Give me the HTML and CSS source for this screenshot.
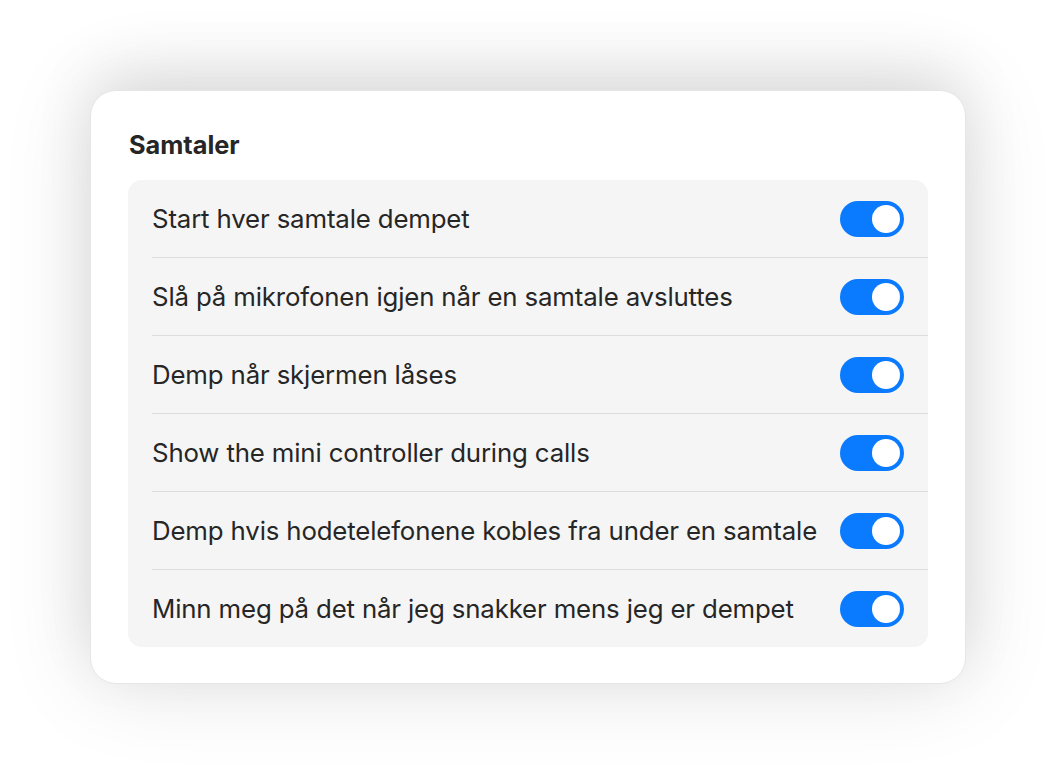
FILE: index.html
```html
<!DOCTYPE html>
<html lang="nb">
<head>
    <meta charset="UTF-8">
    <meta name="viewport" content="width=device-width, initial-scale=1.0">
    <title>Samtaler</title>
    <link rel="stylesheet" href="styles.css">
</head>
<body>
    <div class="card">
        <h2 class="section-title">Samtaler</h2>
        <div class="list">
            <div class="row">
                <div class="row-inner">
                    <span class="label">Start hver samtale dempet</span>
                    <div class="toggle on"><div class="knob"></div></div>
                </div>
            </div>
            <div class="row">
                <div class="row-inner">
                    <span class="label">Slå på mikrofonen igjen når en samtale avsluttes</span>
                    <div class="toggle on"><div class="knob"></div></div>
                </div>
            </div>
            <div class="row">
                <div class="row-inner">
                    <span class="label">Demp når skjermen låses</span>
                    <div class="toggle on"><div class="knob"></div></div>
                </div>
            </div>
            <div class="row">
                <div class="row-inner">
                    <span class="label">Show the mini controller during calls</span>
                    <div class="toggle on"><div class="knob"></div></div>
                </div>
            </div>
            <div class="row">
                <div class="row-inner">
                    <span class="label">Demp hvis hodetelefonene kobles fra under en samtale</span>
                    <div class="toggle on"><div class="knob"></div></div>
                </div>
            </div>
            <div class="row">
                <div class="row-inner">
                    <span class="label">Minn meg på det når jeg snakker mens jeg er dempet</span>
                    <div class="toggle on"><div class="knob"></div></div>
                </div>
            </div>
        </div>
    </div>
</body>
</html>
```

FILE: styles.css
```css
html {
    background: #ffffff;
}

body {
    margin: 0;
    padding: 90px;
    min-height: 100vh;
    box-sizing: border-box;
    font-family: Inter, "Noto Sans", sans-serif;
    color: #262626;
}

.card {
    width: 800px;
    padding: 38px 37px 36px 37px;
    background: #fff;
    border: 1px solid #e6e6e6;
    border-radius: 26px;
    box-shadow: 0 0 90px rgba(0, 0, 0, 0.12), 0 -20px 60px rgba(0, 0, 0, 0.08);
}

.section-title {
    margin: 0 0 19px 1px;
    font-size: 25.3px;
    line-height: 32px;
    font-weight: 700;
    color: #262626;
}

.list {
    background: #f5f5f5;
    border-radius: 14px;
}

.row {
    padding-left: 24px;
}

.row-inner {
    display: flex;
    align-items: center;
    justify-content: space-between;
    height: 77px;
    padding-right: 24px;
    border-bottom: 1px solid #dcdcdc;
}

.row:last-child .row-inner {
    border-bottom: none;
}

.label {
    font-size: 25.8px;
    letter-spacing: -0.15px;
}

.toggle {
    width: 64px;
    height: 36px;
    border-radius: 18px;
    background: #d0d0d0;
    display: flex;
    align-items: center;
    padding: 0 4px;
    box-sizing: border-box;
}

.toggle.on {
    background: #0a7aff;
    justify-content: flex-end;
}

.knob {
    width: 28px;
    height: 28px;
    border-radius: 50%;
    background: #fff;
}
```
